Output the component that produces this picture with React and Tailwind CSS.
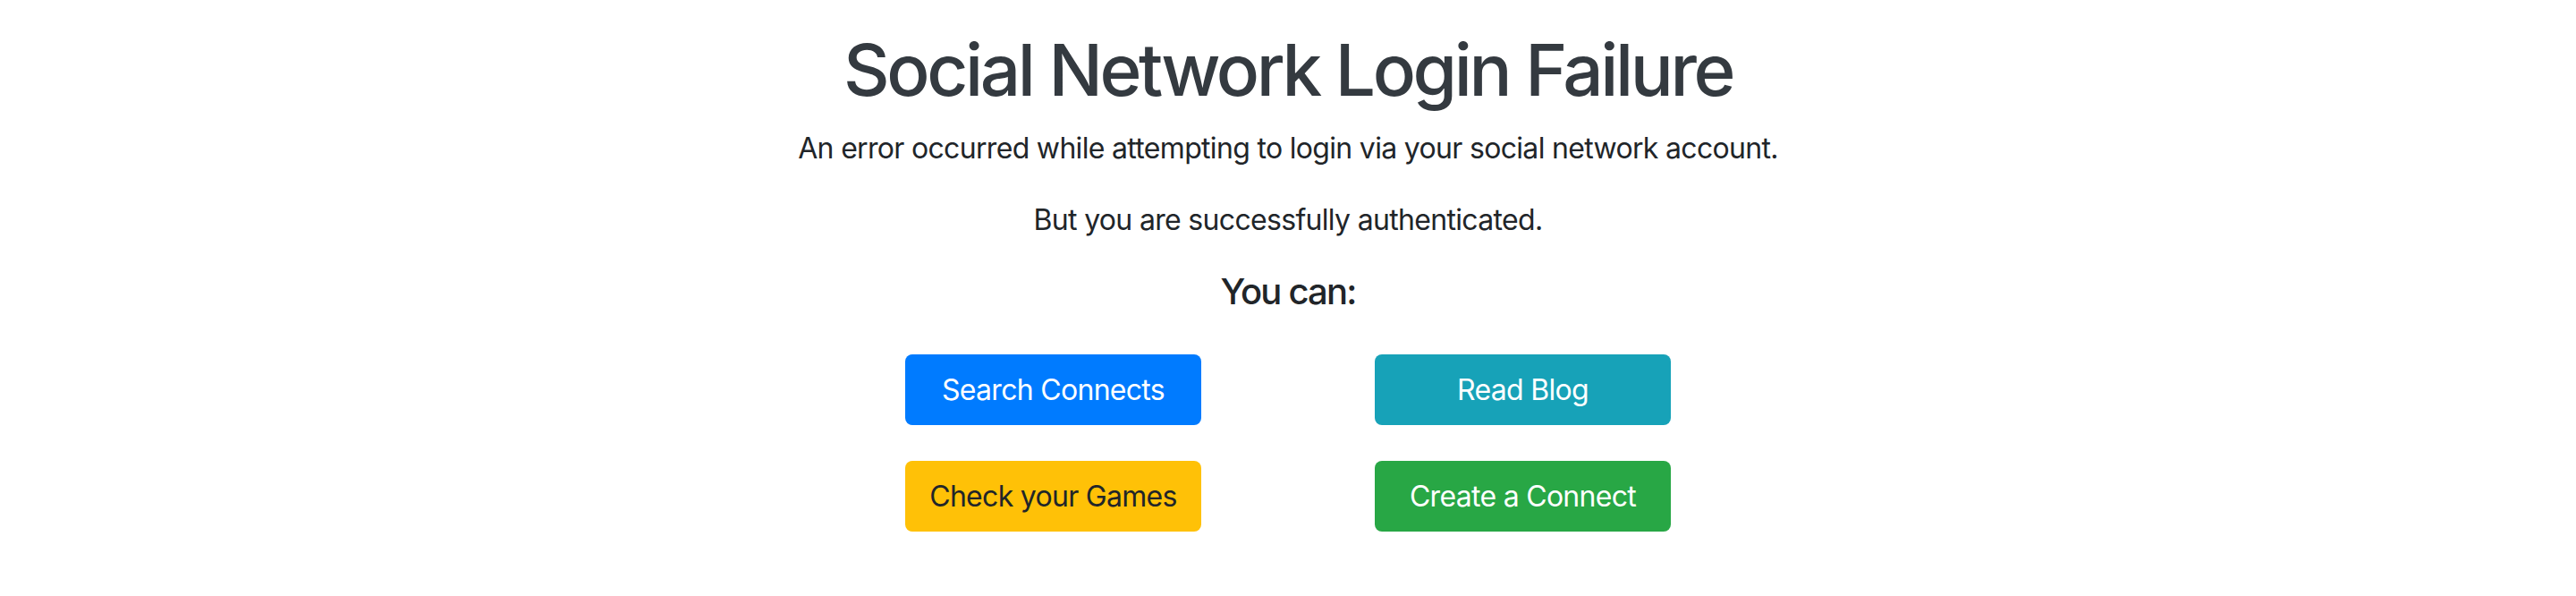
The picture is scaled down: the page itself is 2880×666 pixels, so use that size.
import React from 'react';

// Buttons shown under "You can:"
const actions = [
  { label: 'Search Connects', className: 'bg-[#007bff] text-white' },
  { label: 'Read Blog', className: 'bg-[#17a2b8] text-white' },
  { label: 'Check your Games', className: 'bg-[#ffc107] text-[#212529]' },
  { label: 'Create a Connect', className: 'bg-[#28a745] text-white' },
];

export default function App() {
  return (
    <div className="min-h-[666px] bg-white font-['Inter',sans-serif] text-[#212529] flex flex-col items-center pt-[30px]">
      <h1 className="text-[80px] leading-[96px] font-medium text-[#343a40] tracking-[-3.4px] mb-[16px]">
        Social Network Login Failure
      </h1>
      <p className="text-[32px] leading-[48px] tracking-[-0.68px] mb-[32px]">
        An error occurred while attempting to login via your social network account.
      </p>
      <p className="text-[32px] leading-[48px] tracking-[-0.68px] mb-[32px]">But you are successfully authenticated.</p>
      <h5 className="text-[40px] leading-[48px] font-medium tracking-[-1.8px] mb-[46px]">You can:</h5>

      <div className="grid grid-cols-2 gap-x-[194px] gap-y-[40px]">
        {actions.map((action) => (
          <button
            key={action.label}
            className={`w-[331px] h-[79px] rounded-[8px] text-[32px] leading-[48px] tracking-[-0.7px] ${action.className}`}
          >
            {action.label}
          </button>
        ))}
      </div>
    </div>
  );
}
